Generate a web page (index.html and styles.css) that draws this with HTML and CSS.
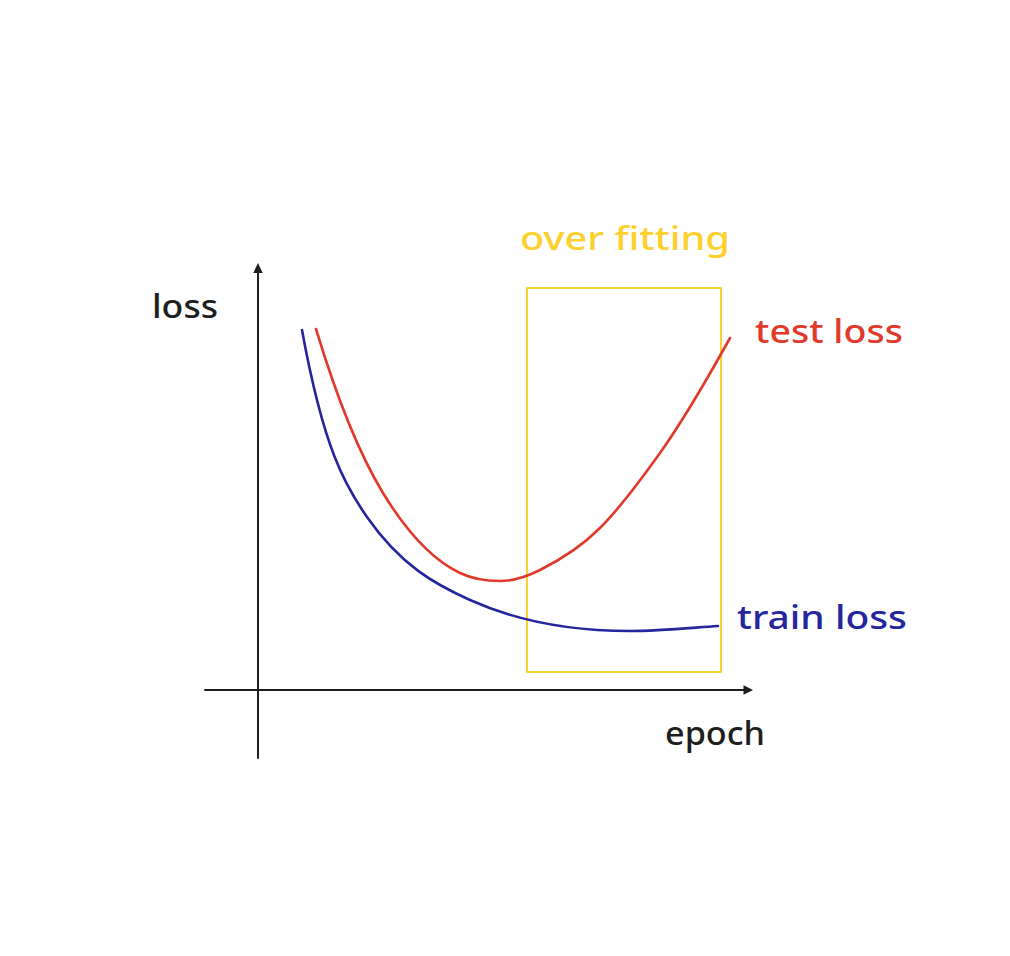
FILE: index.html
```html
<!DOCTYPE html>
<html lang="en">
<head>
<meta charset="utf-8">
<title>Overfitting</title>
<link rel="stylesheet" href="styles.css">
</head>
<body>
<main class="canvas">
  <svg class="diagram" width="1010" height="956" viewBox="0 0 1010 956" xmlns="http://www.w3.org/2000/svg">
    <!-- over fitting region -->
    <rect class="region" x="527" y="288" width="194" height="384"/>

    <!-- axes -->
    <line class="axis" x1="258" y1="758" x2="258" y2="270"/>
    <polygon class="arrow" points="258,263 253.3,273 262.7,273"/>
    <line class="axis" x1="205" y1="690" x2="746" y2="690"/>
    <polygon class="arrow" points="753,690 743.5,685.3 743.5,694.7"/>

    <!-- train loss curve -->
    <path class="curve train" d="M302,330 C323.7,449.2 345.3,486 367,517 C401.3,566.1 435.7,584.6 470,600 C523.3,624 576.7,631 630,631 C659.3,631 688.7,628 718,626"/>

    <!-- test loss curve -->
    <path class="curve test" d="M316,329 C338.3,402.7 360.7,456.4 383,493 C408.7,535.1 434.3,560.8 460,573 C473.3,579.3 486.7,581 500,581 C513.3,581 526.7,576.7 540,570 C560,560 580,548 600,528 C620,508 640,481 660,453 C683.3,420.3 706.7,380 730,338"/>

    <!-- labels -->
    <text class="label label-fit" x="520" y="250" textLength="210" lengthAdjust="spacingAndGlyphs">over fitting</text>
    <text class="label label-dark" x="152" y="318" textLength="66" lengthAdjust="spacingAndGlyphs">loss</text>
    <text class="label label-test" x="755" y="343" textLength="148" lengthAdjust="spacingAndGlyphs">test loss</text>
    <text class="label label-train" x="737" y="629" textLength="170" lengthAdjust="spacingAndGlyphs">train loss</text>
    <text class="label label-dark" x="665" y="745" textLength="100" lengthAdjust="spacingAndGlyphs">epoch</text>
  </svg>
</main>
</body>
</html>
```

FILE: styles.css
```css
html, body {
  margin: 0;
  padding: 0;
  background: #ffffff;
}

.canvas {
  width: 1010px;
  height: 956px;
  overflow: hidden;
}

.diagram {
  display: block;
}

.region {
  fill: none;
  stroke: #fcd02e;
  stroke-width: 2;
}

.axis {
  stroke: #1e1e1e;
  stroke-width: 2;
  stroke-linecap: round;
}

.arrow {
  fill: #1e1e1e;
}

.curve {
  fill: none;
  stroke-width: 2.6;
  stroke-linecap: round;
  stroke-linejoin: round;
}

.train {
  stroke: #25259e;
}

.test {
  stroke: #e03a2c;
}

.label {
  font-family: "Noto Sans", "DejaVu Sans", sans-serif;
  font-size: 32px;
  font-weight: 500;
}

.label-dark {
  fill: #1e1e1e;
}

.label-fit {
  fill: #fcd02e;
}

.label-test {
  fill: #e03a2c;
}

.label-train {
  fill: #25259e;
}
```
